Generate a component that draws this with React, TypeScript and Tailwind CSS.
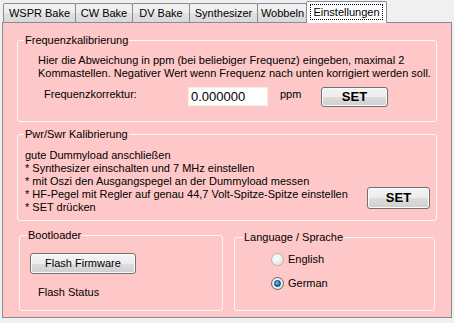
import React from "react";

const tabBase =
  "h-[19px] border border-b-0 border-[#898c95] bg-[linear-gradient(#f3f3f3_0%,#ececec_50%,#e1e1e1_51%,#d9d9d9_100%)] flex items-center justify-center rounded-t-[2px]";

const btn =
  "border border-[#707070] rounded-[3px] bg-[linear-gradient(#f4f4f4_0%,#ececec_50%,#dddddd_51%,#cfcfcf_100%)] shadow-[inset_0_0_0_1px_#fbfbfb] flex items-center justify-center";

function Radio({ checked }: { checked: boolean }) {
  return (
    <span
      className={
        "w-[13px] h-[13px] rounded-full border flex items-center justify-center " +
        (checked
          ? "border-[#5d6b7a] bg-[radial-gradient(circle_at_50%_40%,#ffffff_0%,#e4e4e4_70%,#c8c8c8_100%)]"
          : "border-[#b4b4b4] bg-[radial-gradient(circle_at_40%_35%,#ffffff_0%,#ececec_55%,#d6d6d6_100%)]")
      }
    >
      {checked ? (
        <span className="w-[7px] h-[7px] rounded-full bg-[radial-gradient(circle_at_40%_35%,#8ed0ff_0%,#2a86d0_45%,#0c3f7a_100%)] border border-[#0b3560]" />
      ) : (
        <span className="w-[7px] h-[7px] rounded-full bg-[radial-gradient(circle_at_40%_35%,#ffffff_0%,#e2e2e2_100%)]" />
      )}
    </span>
  );
}

export default function App() {
  return (
    <div
      className="w-[454px] h-[323px] bg-[#f0f0f0] text-[11px] text-black overflow-hidden"
      style={{ fontFamily: '"Liberation Sans", Arial, sans-serif' }}
    >
      {/* Tab strip */}
      <div className="h-[22px] flex items-end pl-[3px] relative z-10">
        <div className={tabBase + " w-[73px]"}>WSPR Bake</div>
        <div className={tabBase + " w-[58px] -ml-px"}>CW Bake</div>
        <div className={tabBase + " w-[58px] -ml-px"}>DV Bake</div>
        <div className={tabBase + " w-[69px] -ml-px"}>Synthesizer</div>
        <div className={tabBase + " w-[51px] -ml-px"}>Wobbeln</div>
        <div className="-ml-[2px] w-[81px] h-[22px] mb-[-1px] bg-white border border-b-0 border-[#898c95] rounded-t-[2px] flex items-start justify-center pt-[2px]">
          <span className="border border-dotted border-black px-[2px] leading-[14px] h-[16px]">
            Einstellungen
          </span>
        </div>
      </div>

      {/* Tab page */}
      <div className="ml-[2px] w-[450px] h-[296px] border border-[#898c95] bg-[#ffc8c8] flex flex-col">
        {/* Group 1 */}
        <fieldset className="ml-[14px] mt-[11px] w-[420px] h-[88px] border border-[#f8f8f8] rounded-[3px]">
          <legend className="ml-[6px] px-[1px] leading-[13px]">Frequenzkalibrierung</legend>
          <div className="pl-[20px] pt-[7px] leading-[13px]">
            <div>Hier die Abweichung in ppm (bei beliebiger Frequenz) eingeben, maximal 2</div>
            <div>Kommastellen. Negativer Wert wenn Frequenz nach unten korrigiert werden soll.</div>
          </div>
          <div className="flex items-center mt-[6px] h-[20px]">
            <span className="w-[170px] pl-[26px] pb-[3px]">Frequenzkorrektur:</span>
            <div className="w-[80px] h-[19px] bg-white border border-[#f2eeee] pl-[2px] flex items-center text-[13px] leading-[15px]">
              0.000000
            </div>
            <span className="w-[53px] pl-[12px] pb-[3px]">ppm</span>
            <button className={btn + " w-[67px] h-[20px] mt-[2px] text-[13px] font-bold"}>SET</button>
          </div>
        </fieldset>

        {/* Group 2 */}
        <fieldset className="ml-[14px] mt-[6px] w-[420px] h-[93px] border border-[#f8f8f8] rounded-[3px]">
          <legend className="ml-[6px] px-[1px] leading-[13px]">Pwr/Swr Kalibrierung</legend>
          <div className="flex justify-between pr-[6px]">
            <div className="pl-[7px] pt-[8px] leading-[13px]">
              <div>gute Dummyload anschließen</div>
              <div>* Synthesizer einschalten und 7 MHz einstellen</div>
              <div>* mit Oszi den Ausgangspegel an der Dummyload messen</div>
              <div>* HF-Pegel mit Regler auf genau 44,7 Volt-Spitze-Spitze einstellen</div>
              <div>* SET drücken</div>
            </div>
            <button className={btn + " w-[63px] h-[22px] mt-[46px] text-[13px] font-bold"}>SET</button>
          </div>
        </fieldset>

        {/* Bottom row */}
        <div className="flex items-start">
          <fieldset className="ml-[16px] mt-[8px] w-[204px] h-[82px] border border-[#f8f8f8] rounded-[3px]">
            <legend className="ml-[7px] px-[1px] leading-[13px]">Bootloader</legend>
            <button className={btn + " ml-[10px] mt-[11px] w-[106px] h-[21px] leading-[13px]"}>
              Flash Firmware
            </button>
            <div className="ml-[18px] mt-[12px] leading-[13px]">Flash Status</div>
          </fieldset>
          <fieldset className="ml-[11px] mt-[10px] w-[201px] h-[80px] border border-[#f8f8f8] rounded-[3px]">
            <legend className="ml-[8px] px-[1px] leading-[13px]">Language / Sprache</legend>
            <div className="flex flex-col gap-[11px] mt-[9px] pl-[36px]">
              <div className="flex items-center h-[13px]">
                <Radio checked={false} />
                <span className="ml-[4px] leading-[13px]">English</span>
              </div>
              <div className="flex items-center h-[13px]">
                <Radio checked={true} />
                <span className="ml-[4px] leading-[13px]">German</span>
              </div>
            </div>
          </fieldset>
        </div>
      </div>
    </div>
  );
}
